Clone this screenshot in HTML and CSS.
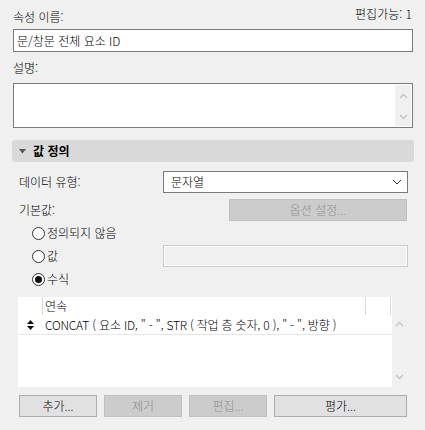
FILE: index.html
```html
<!DOCTYPE html>
<html lang="ko">
<head>
<meta charset="utf-8">
<link rel="stylesheet" href="styles.css">
</head>
<body>
<div class="panel">
  <div class="toprow">
    <span class="lbl">속성 이름:</span>
    <span class="editable">편집가능: 1</span>
  </div>
  <div class="field name">문/창문 전체 요소 ID</div>
  <div class="lbl desc-lbl">설명:</div>
  <div class="textarea">
    <div class="vscroll">
      <svg class="chev" width="9" height="6" viewBox="0 0 9 6"><path d="M1 5 L4.5 1.5 L8 5" fill="none" stroke="#c4c4c4" stroke-width="1.4"/></svg>
      <svg class="chev" width="9" height="6" viewBox="0 0 9 6"><path d="M1 1 L4.5 4.5 L8 1" fill="none" stroke="#c4c4c4" stroke-width="1.4"/></svg>
    </div>
  </div>
  <div class="section">
    <svg class="tri" width="7" height="5" viewBox="0 0 7 5"><path d="M0 0 H7 L3.5 4.5 Z" fill="#555"/></svg>
    <span class="sec-title">값 정의</span>
  </div>
  <div class="frow type-row">
    <span class="lbl">데이터 유형:</span>
    <div class="select">
      <span>문자열</span>
      <svg width="10" height="6" viewBox="0 0 10 6"><path d="M1 1 L5 5 L9 1" fill="none" stroke="#333" stroke-width="1"/></svg>
    </div>
  </div>
  <div class="frow default-row">
    <span class="lbl">기본값:</span>
    <div class="btn disabled opt">옵션 설정...</div>
  </div>
  <div class="radio-row">
    <span class="radio"></span><span>정의되지 않음</span>
  </div>
  <div class="radio-row r2">
    <span class="radio"></span><span>값</span>
    <div class="field disabled-field"></div>
  </div>
  <div class="radio-row r3">
    <span class="radio checked"></span><span>수식</span>
  </div>
  <div class="list">
    <div class="table">
      <div class="thead">
        <div class="c1"></div>
        <div class="c2">연속</div>
        <div class="c3"></div>
      </div>
      <div class="trow">
        <div class="c1 sort">
          <svg width="7" height="10" viewBox="0 0 7 10"><path d="M3.5 0 L7 4 H0 Z M0 6 H7 L3.5 10 Z" fill="#111"/></svg>
        </div>
        <div class="c2 formula">CONCAT ( 요소 ID, " - ", STR ( 작업 층 숫자, 0 ), " - ", 방향 )</div>
      </div>
    </div>
    <div class="lscroll">
      <svg class="chev" width="9" height="6" viewBox="0 0 9 6"><path d="M1 5 L4.5 1.5 L8 5" fill="none" stroke="#c4c4c4" stroke-width="1.4"/></svg>
      <svg class="chev" width="9" height="6" viewBox="0 0 9 6"><path d="M1 1 L4.5 4.5 L8 1" fill="none" stroke="#c4c4c4" stroke-width="1.4"/></svg>
    </div>
  </div>
  <div class="buttons">
    <div class="btn b-small">추가...</div>
    <div class="btn disabled b-small">제거</div>
    <div class="btn disabled b-small">편집...</div>
    <div class="btn b-wide">평가...</div>
  </div>
</div>
</body>
</html>
```
FILE: styles.css
```css
html, body {
  margin: 0;
  padding: 0;
  background: #f0f0f0;
}
body {
  width: 425px;
  height: 430px;
  overflow: hidden;
  font-family: "Noto Sans CJK KR", "Noto Sans", sans-serif;
  font-size: 12px;
  font-weight: 300;
  line-height: 16px;
  color: #000;
}
.panel {
  display: flex;
  flex-direction: column;
}
.toprow {
  height: 29px;
  display: flex;
  justify-content: space-between;
  align-items: flex-end;
  padding: 0 13px 0 13px;
  box-sizing: border-box;
}
.toprow .lbl {
  margin-bottom: 4px;
}
.editable {
  margin-bottom: 7px;
}
.field {
  box-sizing: border-box;
  border: 1px solid #7a7a7a;
  background: #fff;
}
.name {
  margin: 0 12px 0 13px;
  height: 23px;
  line-height: 21px;
  padding-left: 3px;
}
.desc-lbl {
  margin-left: 13px;
  height: 31px;
  padding-top: 8px;
  box-sizing: border-box;
}
.textarea {
  margin: 0 12px 0 13px;
  height: 45px;
  box-sizing: border-box;
  border: 1px solid #7a7a7a;
  background: #fff;
  display: flex;
  justify-content: flex-end;
  padding: 1px 1px 1px 0;
}
.vscroll {
  width: 16px;
  background: #f0f0f0;
  display: flex;
  flex-direction: column;
  align-items: center;
  justify-content: space-between;
  padding: 8px 0 6px;
  box-sizing: border-box;
}
.chev {
  display: block;
}
.section {
  margin: 12px 11px 0 12px;
  height: 22px;
  background: #d9d9d9;
  border-radius: 3px;
  display: flex;
  align-items: center;
  padding-left: 7px;
}
.tri {
  display: block;
  margin-right: 7px;
}
.sec-title {
  font-weight: 700;
}
.frow {
  display: flex;
  align-items: center;
  justify-content: space-between;
  padding-left: 19px;
  height: 22px;
}
.type-row {
  margin-top: 9px;
}
.select {
  width: 245px;
  height: 22px;
  box-sizing: border-box;
  border: 1px solid #7a7a7a;
  background: #fff;
  margin-right: 17px;
  display: flex;
  align-items: center;
  justify-content: space-between;
  padding: 0 5px 0 7px;
}
.select svg {
  display: block;
}
.default-row {
  margin-top: 6px;
}
.btn {
  box-sizing: border-box;
  height: 22px;
  border: 1px solid #adadad;
  background: #e1e1e1;
  display: flex;
  align-items: center;
  justify-content: center;
}
.btn.disabled {
  background: #cccccc;
  border-color: #bfbfbf;
  color: #8f8f8f;
}
.opt {
  width: 178px;
  margin-right: 18px;
}
.radio-row {
  display: flex;
  align-items: center;
  height: 22px;
  margin-top: 1px;
  padding-left: 32px;
}
.radio {
  width: 13px;
  height: 13px;
  box-sizing: border-box;
  border: 1px solid #333;
  border-radius: 50%;
  background: #fff;
  margin-right: 2px;
  display: flex;
  align-items: center;
  justify-content: center;
}
.radio.checked::after {
  content: "";
  width: 7px;
  height: 7px;
  border-radius: 50%;
  background: #111;
}
.disabled-field {
  margin-left: auto;
  margin-right: 17px;
  width: 245px;
  height: 22px;
  border-color: #cccccc;
  background: #f0f0f0;
  box-shadow: inset 0 0 0 1px #fbfbfb;
}
.list {
  margin: 7px 18px 0 18px;
  height: 90px;
  display: flex;
}
.table {
  width: 374px;
  background: #fff;
}
.thead {
  height: 18px;
  display: flex;
}
.thead .c1 {
  width: 24px;
  border-right: 1px solid #dadada;
}
.thead .c2 {
  width: 320px;
  padding-left: 2px;
  border-right: 1px solid #dadada;
  line-height: 18px;
}
.thead .c3 {
  width: 24px;
  border-right: 1px solid #dadada;
}
.trow {
  height: 20px;
  box-sizing: border-box;
  border-bottom: 1px solid #e6e6e6;
  display: flex;
  align-items: center;
}
.trow .c1 {
  width: 25px;
  display: flex;
  justify-content: center;
}
.trow .c1 svg {
  display: block;
}
.trow .c2 {
  padding-left: 2px;
  white-space: nowrap;
}
.formula {
  letter-spacing: -0.2px;
}
.lscroll {
  width: 15px;
  display: flex;
  flex-direction: column;
  align-items: center;
  justify-content: space-between;
  padding: 24px 0 7px;
  box-sizing: border-box;
}
.buttons {
  margin: 8px 18px 0 19px;
  display: flex;
  gap: 7px;
}
.b-small {
  width: 78px;
}
.b-wide {
  width: 133px;
}
```
